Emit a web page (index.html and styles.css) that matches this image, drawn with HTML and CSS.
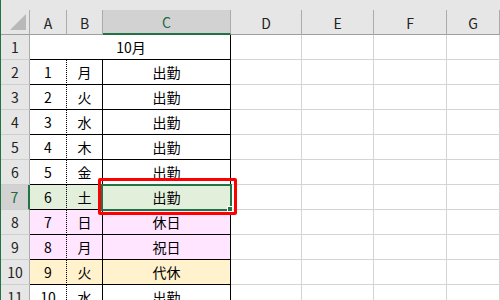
FILE: index.html
```html
<!DOCTYPE html>
<html lang="ja">
<head>
<meta charset="utf-8">
<link rel="stylesheet" href="styles.css">
</head>
<body>
<div class="app">
  <div class="sheet">
    <div class="corner"><span class="tri"></span></div>
    <div class="ch">A</div>
    <div class="ch">B</div>
    <div class="ch ch-sel">C</div>
    <div class="ch">D</div>
    <div class="ch">E</div>
    <div class="ch">F</div>
    <div class="ch">G</div>

    <div class="rh">1</div>
    <div class="c merged">10月</div>
    <div class="g"></div><div class="g"></div><div class="g"></div><div class="g"></div>

    <div class="rh">2</div>
    <div class="c a">1</div><div class="c b">月</div><div class="c cc">出勤</div>
    <div class="g"></div><div class="g"></div><div class="g"></div><div class="g"></div>

    <div class="rh">3</div>
    <div class="c a">2</div><div class="c b">火</div><div class="c cc">出勤</div>
    <div class="g"></div><div class="g"></div><div class="g"></div><div class="g"></div>

    <div class="rh">4</div>
    <div class="c a">3</div><div class="c b">水</div><div class="c cc">出勤</div>
    <div class="g"></div><div class="g"></div><div class="g"></div><div class="g"></div>

    <div class="rh">5</div>
    <div class="c a">4</div><div class="c b">木</div><div class="c cc">出勤</div>
    <div class="g"></div><div class="g"></div><div class="g"></div><div class="g"></div>

    <div class="rh">6</div>
    <div class="c a">5</div><div class="c b">金</div><div class="c cc">出勤</div>
    <div class="g"></div><div class="g"></div><div class="g"></div><div class="g"></div>

    <div class="rh rh-sel">7</div>
    <div class="c a sat">6</div><div class="c b sat">土</div><div class="c cc sat">出勤</div>
    <div class="g"></div><div class="g"></div><div class="g"></div><div class="g"></div>

    <div class="rh">8</div>
    <div class="c a hol">7</div><div class="c b hol">日</div><div class="c cc hol">休日</div>
    <div class="g"></div><div class="g"></div><div class="g"></div><div class="g"></div>

    <div class="rh">9</div>
    <div class="c a hol">8</div><div class="c b hol">月</div><div class="c cc hol">祝日</div>
    <div class="g"></div><div class="g"></div><div class="g"></div><div class="g"></div>

    <div class="rh">10</div>
    <div class="c a sub">9</div><div class="c b sub">火</div><div class="c cc sub">代休</div>
    <div class="g"></div><div class="g"></div><div class="g"></div><div class="g"></div>

    <div class="rh">11</div>
    <div class="c a">10</div><div class="c b">水</div><div class="c cc">出勤</div>
    <div class="g"></div><div class="g"></div><div class="g"></div><div class="g"></div>
  </div>
  <div class="selection"><span class="handle"></span></div>
  <div class="callout"></div>
</div>
</body>
</html>
```

FILE: styles.css
```css
* { box-sizing: border-box; }
html, body { margin: 0; padding: 0; }
body {
  width: 500px;
  height: 300px;
  overflow: hidden;
  background: #ffffff;
  font-family: "Noto Sans CJK JP", "Noto Sans", sans-serif;
  font-size: 14px;
  color: #000;
}
.app {
  position: relative;
  width: 500px;
  height: 300px;
  overflow: hidden;
}
.sheet {
  display: grid;
  grid-template-columns: 29px 37px 36px 128px 71px 72px 73px 1fr;
  grid-template-rows: repeat(12, 25px);
  padding-top: 10px;
  background: #e6e6e6;
  border-left: 1px solid #217346;
  height: 300px;
}
.sheet > div {
  display: flex;
  align-items: center;
  justify-content: center;
  line-height: 1;
}
.corner {
  position: relative;
  background: #e6e6e6;
  border-right: 1px solid #ababab;
  border-bottom: 1px solid #9e9e9e;
}
.tri {
  position: absolute;
  right: 3px;
  bottom: 4px;
  width: 0;
  height: 0;
  border-left: 16px solid transparent;
  border-bottom: 16px solid #b9b9b9;
}
.ch {
  background: #e6e6e6;
  border-right: 1px solid #ababab;
  border-bottom: 1px solid #9e9e9e;
  color: #222;
  padding-top: 1px;
}
.ch-sel {
  background: #d2d2d2;
  border-bottom: 2px solid #217346;
  color: #1d6b3f;
}
.rh {
  background: #e6e6e6;
  border-right: 1px solid #ababab;
  border-bottom: 1px solid #cfcfcf;
  color: #222;
}
.rh-sel {
  background: #d2d2d2;
  border-right: 2px solid #217346;
  color: #1d6b3f;
}
.g {
  background: #fff;
  border-right: 1px solid #d4d4d4;
  border-bottom: 1px solid #d4d4d4;
}
.c {
  background: #fff;
  border-bottom: 1px solid #000;
}
.merged {
  grid-column: span 3;
  border-right: 1px solid #000;
  padding-left: 2px;
}
.a {
  border-right: 1px dotted #000;
}
.b {
  border-right: 1px solid #000;
}
.cc {
  border-right: 1px solid #000;
}
.sat { background: #e2efda; }
.hol { background: #ffe5ff; }
.sub { background: #fff2cc; }

.selection {
  position: absolute;
  left: 101px;
  top: 184px;
  width: 131px;
  height: 27px;
  border: 2px solid #217346;
}
.handle {
  position: absolute;
  right: -3px;
  bottom: -3px;
  width: 6px;
  height: 6px;
  background: #217346;
  border: 1px solid #fff;
}
.callout {
  position: absolute;
  left: 98px;
  top: 178px;
  width: 139px;
  height: 37px;
  border: 3px solid #ff0000;
  border-radius: 2px;
}
```
